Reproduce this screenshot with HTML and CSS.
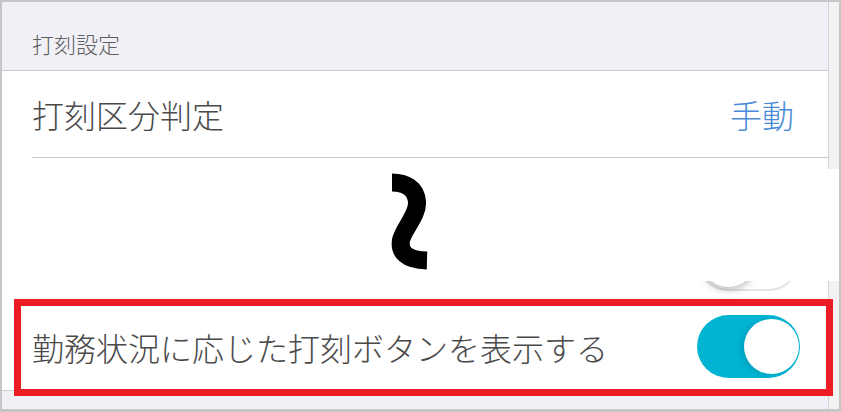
FILE: index.html
```html
<!DOCTYPE html>
<html lang="ja">
<head>
    <meta charset="utf-8" />
    <title>打刻設定</title>
    <link rel="stylesheet" href="styles.css">
</head>
<body>
    <div class="frame">
        <div class="table">
            <!-- セクション見出し -->
            <div class="section-head">打刻設定</div>
            <div class="row">
                <span class="label">打刻区分判定</span>
                <span class="value">手動</span>
            </div>
            <!-- 省略された行 -->
            <div class="row row-tall">
                <span class="label"></span>
                <div class="switch"><div class="knob"></div></div>
            </div>
            <div class="row row-last">
                <span class="label">勤務状況に応じた打刻ボタンを表示する</span>
                <div class="switch on"><div class="knob"></div></div>
            </div>
            <div class="section-foot"></div>
        </div>
        <div class="strip"></div>

        <!-- 切り取り部分 -->
        <div class="cut">
            <svg class="squiggle" width="837" height="112" viewBox="2 169 837 112">
                <path d="M392,182.5 C405,182.5 416,188 417,202 C418,215 404,228 401,240 C399,252 406,260 427,260.5" fill="none" stroke="#000" stroke-width="18" />
            </svg>
        </div>
        <!-- 赤枠 -->
        <div class="mark"></div>
    </div>
</body>
</html>
```

FILE: styles.css
```css
/*清除边距*/
html, body{
    margin: 0;
    padding: 0;
    background: #fff;
}
body{
    font-family: "Noto Sans CJK JP", "Noto Sans", sans-serif;
    font-weight: 300;
    color: #4a4a4a;
}
/*外枠*/
.frame{
    position: relative;
    box-sizing: border-box;
    width: 841px;
    height: 412px;
    border: 2px solid #c6c6c6;
    border-bottom-width: 3px;
    display: flex;
    overflow: hidden;
}
.table{
    width: 826px;
    border-right: 1px solid #d2d2d2;
    display: flex;
    flex-direction: column;
}
.strip{
    width: 10px;
    background: #f2f2f2;
}
/*见出し*/
.section-head{
    box-sizing: border-box;
    height: 69px;
    padding: 28px 0 0 30px;
    font-size: 22px;
    line-height: 26px;
    color: #5e5e5e;
    background: #f1f0f6;
    border-bottom: 1px solid #c9c9c9;
}
/*行*/
.row{
    box-sizing: border-box;
    height: 87px;
    margin-left: 30px;
    padding-right: 34px;
    display: flex;
    align-items: center;
    justify-content: space-between;
    border-bottom: 1px solid #c9c9c9;
    font-size: 32px;
}
.value{
    color: #4a8bd7;
}
.row-tall{
    height: 145px;
    padding-right: 28px;
    align-items: flex-end;
}
.row-tall .switch{
    margin-bottom: 11px;
}
.row-last{
    height: 88px;
    margin-left: 0;
    padding-left: 30px;
    padding-right: 28px;
    border-bottom-color: #d0d0d0;
}
.section-foot{
    flex: 1;
    background: #f1f0f6;
}
/*スイッチ*/
.switch{
    box-sizing: border-box;
    width: 103px;
    height: 63px;
    border-radius: 32px;
    border: 2px solid #e4e4e8;
    background: #fff;
    display: flex;
    align-items: center;
    padding: 2px;
}
.switch .knob{
    width: 55px;
    height: 55px;
    border-radius: 50%;
    background: #fff;
    box-shadow: 0 3px 7px rgba(0, 0, 0, 0.25);
}
.switch.on{
    border: none;
    background: #00b4d2;
    justify-content: flex-end;
    padding: 4px 1px 4px 4px;
}
.switch.on .knob{
    box-shadow: -3px 1px 5px rgba(0, 70, 90, 0.18);
}
/*切り取り*/
.cut{
    position: absolute;
    left: 0;
    top: 167px;
    width: 837px;
    height: 112px;
    background: #fff;
}
.squiggle{
    display: block;
}
/*赤枠*/
.mark{
    position: absolute;
    left: 12px;
    top: 297px;
    width: 819px;
    height: 97px;
    box-sizing: border-box;
    border: 7px solid #ec1c24;
}
```
